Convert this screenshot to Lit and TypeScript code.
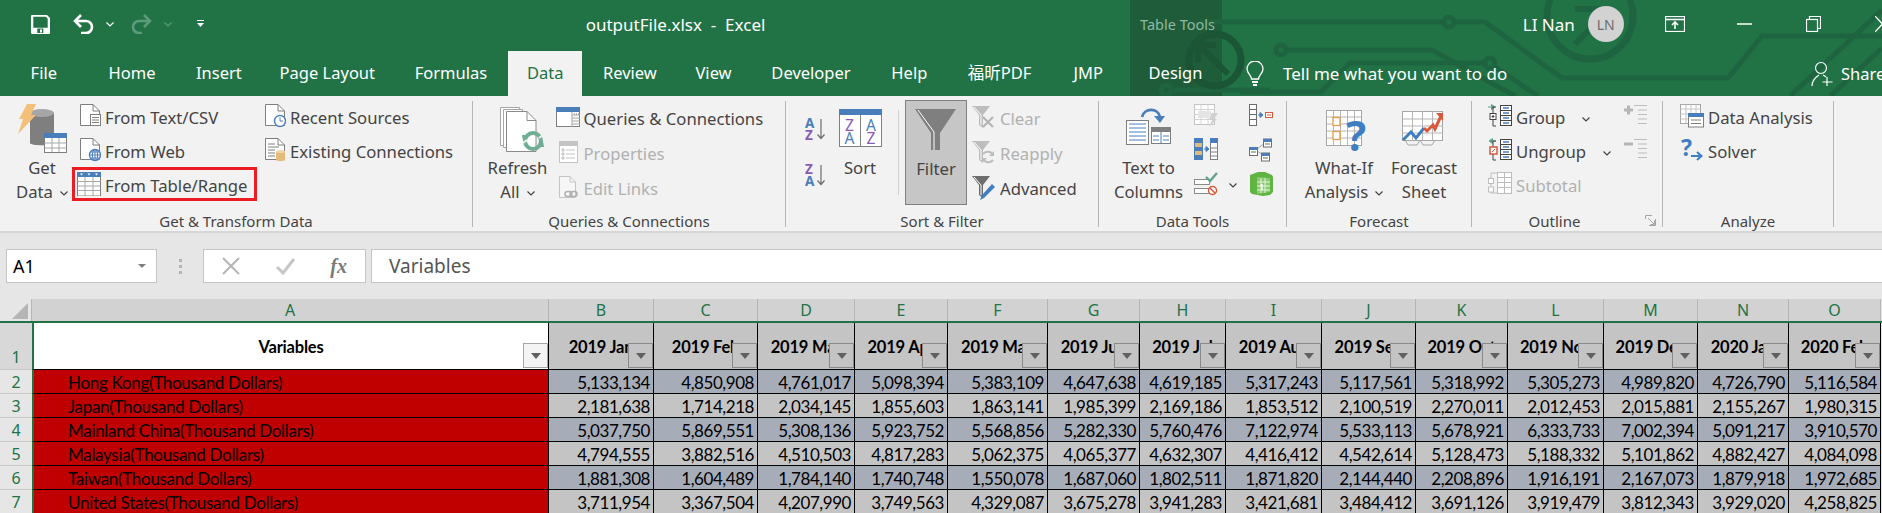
import { LitElement, html, css } from "lit";
import { customElement } from "lit/decorators.js";

const GREEN = "#217346";

const caret = (c = "#444") => html`<svg class="caret" width="8" height="5" viewBox="0 0 8 5"><path d="M.5.5 4 4 7.5.5" fill="none" stroke=${c} stroke-width="1.2"/></svg>`;

const icons = {
  textCsv: html`<svg class="i" width="24" height="24" viewBox="0 0 24 24"><g transform="translate(3 0)"><path d="M.5.5H13L19.5 7V21.5H.5Z" fill="#fff" stroke="#7f7f7f"/><path d="M13 .5V7H19.5" fill="none" stroke="#7f7f7f"/><rect x="10.5" y="10.5" width="10" height="11" fill="#fff" stroke="#7f7f7f"/><path d="M12 13.5h7M12 16h7M12 18.5h7" stroke="#7f7f7f"/></g></svg>`,
  web: html`<svg class="i" width="24" height="24" viewBox="0 0 24 24"><g transform="translate(3 0)"><path d="M.5.5H13L19.5 7V21.5H.5Z" fill="#fff" stroke="#7f7f7f"/><path d="M13 .5V7H19.5" fill="none" stroke="#7f7f7f"/><circle cx="15" cy="17" r="5.5" fill="#fff" stroke="#4a7ebb" stroke-width="1.4"/><path d="M9.5 17h11M15 11.5v11M11 14h8M11 20h8" stroke="#4a7ebb"/><ellipse cx="15" cy="17" rx="2.6" ry="5.5" fill="none" stroke="#4a7ebb"/></g></svg>`,
  table: html`<svg class="i" width="24" height="24" viewBox="0 0 24 24"><rect x=".5" y="1" width="23" height="23" fill="#fff" stroke="#7f7f7f"/><rect y="0" width="24" height="5" fill="#4a7ebb"/><path d="M3 1.5h3L4.500 3.500ZM10.500 1.500h3L12 3.500ZM18 1.500h3L19.500 3.500Z" fill="#fff"/><path d="M.5 9.500h23M.5 14h23M.5 18.500h23M8 5v19M16 5v19" stroke="#a6a6a6"/></svg>`,
  recent: html`<svg class="i" width="24" height="24" viewBox="0 0 24 24"><g transform="translate(3 0)"><path d="M.5.5H13L19.5 7V21.5H.5Z" fill="#fff" stroke="#7f7f7f"/><path d="M13 .5V7H19.5" fill="none" stroke="#7f7f7f"/><circle cx="15" cy="17" r="5.500" fill="#fff" stroke="#4a7ebb" stroke-width="1.400"/><path d="M15 13.500V17h3" fill="none" stroke="#4a7ebb"/></g></svg>`,
  existing: html`<svg class="i" width="24" height="24" viewBox="0 0 24 24"><g transform="translate(3 0)"><path d="M.5.5H13L19.5 7V21.5H.5Z" fill="#fff" stroke="#7f7f7f"/><path d="M13 .5V7H19.5" fill="none" stroke="#7f7f7f"/><path d="M3 6h7M3 9h11M3 12h7M3 15h7M3 18h7" stroke="#7f7f7f"/><path d="M11 13.500h9v8.500c0 1.500-9 1.500-9 0Z" fill="#e5bb7b"/><ellipse cx="15.500" cy="13.500" rx="4.500" ry="1.600" fill="#f0d5a8"/></g></svg>`,
  queries: html`<svg class="i" width="24" height="24" viewBox="0 0 24 24"><rect x=".5" y="1.500" width="23" height="19" fill="#fff" stroke="#7f7f7f"/><rect y="1" width="24" height="5" fill="#4a7ebb"/><path d="M16 6v15M16 9h8M16 12h8M16 15h8M16 18h8" stroke="#a6a6a6"/><path d="M18 8h1M20 8h1M22 8h1" stroke="#7f7f7f"/></svg>`,
  properties: html`<svg class="i" width="24" height="24" viewBox="0 0 24 24"><rect x="3.500" y=".5" width="18" height="21" fill="#fff" stroke="#c4c4c4"/><rect x="3" y="0" width="19" height="5" fill="#c4c4c4"/><path d="M10 9h9M10 13h9M10 17h9" stroke="#c4c4c4"/><path d="M6 8h2v2H6ZM6 12h2v2H6ZM6 16h2v2H6Z" fill="none" stroke="#bdbdbd"/></svg>`,
  links: html`<svg class="i" width="24" height="24" viewBox="0 0 24 24"><g transform="translate(3 0)"><path d="M.5.5H11L16.500 6V21.500H.5Z" fill="#f6f6f6" stroke="#c4c4c4"/><path d="M11 .5V6H16.500" fill="none" stroke="#c4c4c4"/><rect x="6" y="15.500" width="7" height="5" rx="2.500" fill="none" stroke="#b0b0b0" stroke-width="1.500"/><rect x="11" y="15.500" width="7" height="5" rx="2.500" fill="none" stroke="#b0b0b0" stroke-width="1.500"/></g></svg>`,
  clear: html`<svg class="i" width="24" height="24" viewBox="0 0 24 24"><path d="M0 0h18L11 9v13L7 19V9Z" fill="#bdbdbd"/><path d="M2 1l7 8v10" fill="none" stroke="#fff"/><path d="M11 11l10 10M21 11 11 21" stroke="#b5b5b5" stroke-width="2.200"/></svg>`,
  reapply: html`<svg class="i" width="24" height="24" viewBox="0 0 24 24"><path d="M0 0h18L11 9v13L7 19V9Z" fill="#bdbdbd"/><path d="M2 1l7 8v10" fill="none" stroke="#fff"/><path d="M21 14a6 6 0 0 0-10-1M11 18a6 6 0 0 0 10 1" fill="none" stroke="#bdbdbd" stroke-width="2"/><path d="M22 10v5h-5ZM10 22v-5h5Z" fill="#bdbdbd"/></svg>`,
  advanced: html`<svg class="i" width="24" height="24" viewBox="0 0 24 24"><path d="M0 0h18L11 9v13L7 19V9Z" fill="#6d6d6d"/><path d="M2 1l7 8v10" fill="none" stroke="#fff"/><path d="M8 24l2-5L20 8l3 3L12 22Z" fill="#3f7fc1"/></svg>`,
  az: html`<svg width="20" height="24" viewBox="0 0 20 24"><text x="0" y="11" class="sl" fill="#4a7ebb">A</text><text x="0" y="23" class="sl" fill="#8a5ab5">Z</text><path d="M16 2v19M12.500 17.500 16 21.500l3.500-4" fill="none" stroke="#6d6d6d" stroke-width="1.200"/></svg>`,
  za: html`<svg width="20" height="24" viewBox="0 0 20 24"><text x="0" y="11" class="sl" fill="#8a5ab5">Z</text><text x="0" y="23" class="sl" fill="#4a7ebb">A</text><path d="M16 2v19M12.500 17.500 16 21.500l3.500-4" fill="none" stroke="#6d6d6d" stroke-width="1.200"/></svg>`,
  flash: html`<svg class="i" width="24" height="24" viewBox="0 0 24 24"><rect x=".5" y=".5" width="20" height="20" fill="#fff" stroke="#c4c4c4"/><path d="M.5 5.500h20M.5 10.500h20M.5 15.500h20M7 .5v20M14 .5v20" stroke="#d4d4d4"/><rect x="4" y="7" width="13" height="7" fill="#e4e4e4"/><path d="M18 9h6l-4 6h3l-8 8 3-7h-3Z" fill="#d0d0d0"/></svg>`,
  dupes: html`<svg class="i" width="24" height="24" viewBox="0 0 24 24"><rect x="0" y="0" width="9" height="22" fill="#4a7ebb"/><rect x="1" y="5" width="7" height="4" fill="#e5bb7b"/><rect x="1" y="13" width="7" height="4" fill="#e5bb7b"/><rect x="16.500" y=".5" width="7" height="21" fill="#fff" stroke="#7f7f7f"/><rect x="16" y="0" width="8" height="5" fill="#4a7ebb"/><path d="M16.500 10h7M16.500 14h7M16.500 18h7" stroke="#7f7f7f"/><path d="M10 11h4M12 8.500l3 2.500-3 2.500Z" fill="#4a7ebb" stroke="#4a7ebb"/></svg>`,
  validate: html`<svg class="i" width="24" height="24" viewBox="0 0 24 24"><rect x=".5" y="7.500" width="15" height="5" fill="#fff" stroke="#8a8a8a"/><rect x=".5" y="16.500" width="15" height="5" fill="#fff" stroke="#8a8a8a"/><path d="M12 5l4 4 7-8" fill="none" stroke="#5fa38a" stroke-width="2.400"/><circle cx="18.500" cy="18.500" r="4" fill="#fff" stroke="#d9583b" stroke-width="1.500"/><path d="M16 16l5 5" stroke="#d9583b" stroke-width="1.500"/></svg>`,
  consol: html`<svg class="i" width="24" height="24" viewBox="0 0 24 24"><rect x=".5" y=".5" width="7" height="21" fill="#fff" stroke="#6d6d6d"/><path d="M.5 5.500h7M.5 10.500h7M.5 15.500h7" stroke="#6d6d6d"/><path d="M9 11h3M11 8.500l3 2.500-3 2.500Z" fill="#4a7ebb" stroke="#4a7ebb"/><rect x="16.500" y="8.500" width="7" height="5" fill="#fff" stroke="#d9583b"/><path d="M18 11h4" stroke="#d9583b"/></svg>`,
  rel: html`<svg class="i" width="24" height="24" viewBox="0 0 24 24"><path d="M8 11l8-6M8 13l8 5" stroke="#a6a6a6"/><rect x=".5" y="9.500" width="8" height="8" fill="#fff" stroke="#6d6d6d"/><rect y="9" width="9" height="3" fill="#4a7ebb"/><path d="M2 14h5" stroke="#6d6d6d"/><rect x="14.500" y="1" width="8" height="8" fill="#fff" stroke="#6d6d6d"/><rect x="14" y="1" width="9" height="3" fill="#4a7ebb"/><path d="M16 6h5" stroke="#6d6d6d"/><rect x="12.500" y="15" width="8" height="8" fill="#fff" stroke="#6d6d6d"/><rect x="12" y="15" width="9" height="3" fill="#4a7ebb"/><path d="M14 20h5" stroke="#6d6d6d"/></svg>`,
  model: html`<svg class="i" width="24" height="24" viewBox="0 0 24 24"><path d="M1 3 9 0h7l7 3 1 2v15l-3 3-7 1-11-2-2-2Z" fill="#5fb442"/><path d="M8 5l13 1v14l-13 2Z" fill="#8cc974"/><path d="M12 6v15M16 6v15M8 10h13M8 14h13M8 18h13" stroke="#e4f2dc"/><path d="M13 18v-6M13 12l-1.500 2" stroke="#fff" stroke-width="1.200"/></svg>`,
  group: html`<svg class="i" width="24" height="24" viewBox="0 0 24 24"><path d="M0 3h6M3.500 .5 7 3 3.500 5.500Z" fill="#5fa38a" stroke="#5fa38a"/><path d="M8 3H5v19h3" fill="none" stroke="#444"/><rect x="2" y="9.500" width="6" height="6" fill="#fff" stroke="#444"/><path d="M3.500 12.500h3M5 11v3" stroke="#444"/><rect x="12.500" y="1.500" width="11" height="20" fill="#fff" stroke="#444"/><path d="M12.500 6.500h11M12.500 11.500h11M12.500 16.500h11" stroke="#444"/><path d="M15 4h6M15 9h6M15 14h6M15 19h6" stroke="#4a7ebb" stroke-width="1.500"/></svg>`,
  ungroup: html`<svg class="i" width="24" height="24" viewBox="0 0 24 24"><path d="M2 3h6M4.500 .5 1 3 4.500 5.500Z" fill="#5fa38a" stroke="#5fa38a"/><path d="M8 3H5v19h3" fill="none" stroke="#444"/><rect x="2" y="9" width="7" height="7" fill="#fff" stroke="#d9583b" stroke-width="1.500"/><path d="M4 14l3-3" stroke="#d9583b"/><rect x="12.500" y="1.500" width="11" height="20" fill="#fff" stroke="#444"/><path d="M12.500 6.500h11M12.500 11.500h11M12.500 16.500h11" stroke="#444"/><path d="M15 4h6M15 9h6M15 14h6M15 19h6" stroke="#4a7ebb" stroke-width="1.500"/></svg>`,
  subtotal: html`<svg class="i" width="24" height="24" viewBox="0 0 24 24"><path d="M9 1H3v20h6" fill="none" stroke="#bdbdbd"/><rect x=".5" y="6.500" width="5" height="5" fill="#fff" stroke="#bdbdbd"/><rect x=".5" y="15" width="5" height="5" fill="#fff" stroke="#bdbdbd"/><rect x="9.500" y=".5" width="14" height="21" fill="#fff" stroke="#bdbdbd"/><path d="M9.500 5.500h14M9.500 10.500h14M9.500 15.500h14M16.500.5v21" stroke="#bdbdbd"/></svg>`,
  show: html`<svg class="i" width="24" height="24" viewBox="0 0 24 24"><path d="M0 6h9M4.500 1.500v9" stroke="#b5b5b5" stroke-width="3"/><path d="M10 1.500h13M14 6h9M14 10.500h9M14 15h9M14 19.500h9" stroke="#bdbdbd"/></svg>`,
  hide: html`<svg class="i" width="24" height="24" viewBox="0 0 24 24"><path d="M0 6h9" stroke="#b5b5b5" stroke-width="3"/><path d="M10 1.500h13M14 6h9M14 10.500h9M14 15h9M14 19.500h9" stroke="#bdbdbd"/></svg>`,
  analysis: html`<svg class="i" width="24" height="24" viewBox="0 0 24 24"><rect x=".5" y=".5" width="20" height="19" fill="#fff" stroke="#a6a6a6"/><path d="M.5 5h20M.5 10h20M.5 15h20M6 .5v19M11 .5v19M16 .5v19" stroke="#c4c4c4"/><rect x="8.500" y="9.500" width="15" height="13.500" fill="#fff" stroke="#7f7f7f"/><rect x="8" y="9" width="16" height="4" fill="#4a7ebb"/><path d="M11 16h10M11 19.500h10" stroke="#7f7f7f"/></svg>`,
  solver: html`<svg class="i" width="24" height="24" viewBox="0 0 24 24"><text x="1" y="18" class="q" fill="#3f7fc1">?</text><path d="M11 18h10M17 14l4.500 4-4.500 4" fill="none" stroke="#3f7fc1" stroke-width="2"/></svg>`,
};

const bigIcons = {
  getData: html`<svg width="54" height="55" viewBox="0 0 54 55"><path d="M15 42V12h24v30c0 3-24 3-24 0Z" fill="#7f7f7f"/><ellipse cx="27" cy="12" rx="12" ry="4" fill="#a6a6a6"/><path d="M12 3h9l-5 11h5L3 33l5-15H4Z" fill="#f2c078"/><rect x="29.500" y="32.500" width="22" height="19" fill="#fff" stroke="#7f7f7f"/><rect x="29" y="32" width="23" height="5" fill="#4a7ebb"/><path d="M29.500 42h22M29.500 47h22M37 37v14M44 37v14" stroke="#a6a6a6"/></svg>`,
  refresh: html`<svg width="66" height="55" viewBox="0 0 66 55"><path d="M15.500 6.500h19v38h-19Z" fill="#fff" stroke="#a6a6a6"/><path d="M18.500 8.500h19v38h-19Z" fill="#fff" stroke="#a6a6a6"/><path d="M21.500 10.500H42l9 9V50.500H21.500Z" fill="#fff" stroke="#8a8a8a"/><path d="M42 10.500v9h9" fill="none" stroke="#8a8a8a"/><circle cx="48" cy="40" r="8" fill="none" stroke="#6fae95" stroke-width="4"/><path d="M37 34h7l-6 6ZM59 46h-7l6-6Z" fill="#6fae95"/><path d="M38 42l4-3M54 37l4-3" stroke="#f2f2f2" stroke-width="2"/></svg>`,
  sort: html`<svg width="50" height="55" viewBox="0 0 50 55"><rect x="4.500" y="8.500" width="42" height="37" fill="#fff" stroke="#7f7f7f"/><rect x="4" y="8" width="43" height="6" fill="#4a7ebb"/><path d="M25.500 14v31" stroke="#7f7f7f"/><text x="14.500" y="30" class="sb" fill="#8a5ab5">Z</text><text x="14.500" y="43" class="sb" fill="#4a7ebb">A</text><text x="36" y="30" class="sb" fill="#4a7ebb">A</text><text x="36" y="43" class="sb" fill="#8a5ab5">Z</text></svg>`,
  filter: html`<svg width="42" height="42" viewBox="0 0 42 42"><path d="M0 0h41L25 24v17h-9V24Z" fill="#7f7f7f"/><path d="M3 1l16 22v18" fill="none" stroke="#fff"/></svg>`,
  columns: html`<svg width="74" height="55" viewBox="0 0 74 55"><rect x="14.500" y="19.500" width="22" height="24" fill="#fff" stroke="#7f7f7f"/><path d="M17 23h17M17 27h17M17 31h17M17 35h17M17 39h17" stroke="#4a7ebb"/><rect x="39.500" y="26.500" width="19" height="16" fill="#fff" stroke="#7f7f7f"/><rect x="39" y="26" width="20" height="5" fill="#7f7f7f"/><path d="M49 31v12M41 35h6M51 35h6M41 39h6M51 39h6" stroke="#4a7ebb"/><path d="M30 16c2-9 16-10 18 0" fill="none" stroke="#4a7ebb" stroke-width="2.800"/><path d="M42 15h11l-5 7Z" fill="#4a7ebb"/></svg>`,
  whatif: html`<svg width="80" height="55" viewBox="0 0 80 55"><rect x="22.500" y="9.500" width="35" height="35" fill="#fff" stroke="#a6a6a6"/><path d="M22.500 16h35M22.500 23h35M22.500 30h35M22.500 37h35M29.500 9.500v35M36.500 9.500v35M43.500 9.500v35M50.500 9.500v35" stroke="#b5b5b5"/><rect x="29" y="16.500" width="7" height="8" fill="#fff" stroke="#e39b4c" stroke-width="1.300"/><rect x="29" y="30.500" width="7" height="8" fill="#fff" stroke="#e39b4c" stroke-width="1.300"/><text x="42" y="50" class="wq" fill="#3f7fc1">?</text></svg>`,
  forecast: html`<svg width="70" height="55" viewBox="0 0 70 55"><rect x="13.500" y="10.500" width="40" height="29" fill="#fff" stroke="#a6a6a6"/><path d="M13.500 18h40M13.500 25h40M13.500 32h40M23.500 10.500v29M33.500 10.500v29M43.500 10.500v29" stroke="#b5b5b5"/><path d="M14 39l8-8 5 6 8-10" fill="none" stroke="#3f7fc1" stroke-width="3"/><path d="M35 27l3 3 6-6 2 4 6-13" fill="none" stroke="#d9583b" stroke-width="3"/><path d="M47 12h7v8Z" fill="#d9583b"/><path d="M16 39l3 5h9l3-5 3 5h9l3-5" fill="none" stroke="#a6a6a6"/></svg>`,
};

const TABS = [
  { label: "File", w: 78, pad: 0 },
  { label: "Home", w: 87.4, pad: 0 },
  { label: "Insert", w: 83.6, pad: 0 },
  { label: "Page Layout", w: 135.1, pad: 0 },
  { label: "Formulas", w: 93.3, pad: 0 },
  { label: "Data", w: 74, pad: 19, active: true },
  { label: "Review", w: 113.5, pad: 21 },
  { label: "View", w: 75.9, pad: 0 },
  { label: "Developer", w: 120, pad: 0 },
  { label: "Help", w: 76.4, pad: 0 },
  { label: "福昕PDF", w: 105.7, pad: 0 },
  { label: "JMP", w: 75.1, pad: 0 },
  { label: "Design", w: 98.4, pad: 0 },
];

const COLS = ["B", "C", "D", "E", "F", "G", "H", "I", "J", "K", "L", "M", "N", "O"];
const MONTHS = ["2019 Jan", "2019 Feb", "2019 Mar", "2019 Apr", "2019 May", "2019 Jun", "2019 Jul", "2019 Aug", "2019 Sep", "2019 Oct", "2019 Nov", "2019 Dec", "2020 Jan", "2020 Feb"];

const ROWS = [
  ["Hong Kong(Thousand Dollars)", "5,133,134 4,850,908 4,761,017 5,098,394 5,383,109 4,647,638 4,619,185 5,317,243 5,117,561 5,318,992 5,305,273 4,989,820 4,726,790 5,116,584"],
  ["Japan(Thousand Dollars)", "2,181,638 1,714,218 2,034,145 1,855,603 1,863,141 1,985,399 2,169,186 1,853,512 2,100,519 2,270,011 2,012,453 2,015,881 2,155,267 1,980,315"],
  ["Mainland China(Thousand Dollars)", "5,037,750 5,869,551 5,308,136 5,923,752 5,568,856 5,282,330 5,760,476 7,122,974 5,533,113 5,678,921 6,333,733 7,002,394 5,091,217 3,910,570"],
  ["Malaysia(Thousand Dollars)", "4,794,555 3,882,516 4,510,503 4,817,283 5,062,375 4,065,377 4,632,307 4,416,412 4,542,614 5,128,473 5,188,332 5,101,862 4,882,427 4,084,098"],
  ["Taiwan(Thousand Dollars)", "1,881,308 1,604,489 1,784,140 1,740,748 1,550,078 1,687,060 1,802,511 1,871,820 2,144,440 2,208,896 1,916,191 2,167,073 1,879,918 1,972,685"],
  ["United States(Thousand Dollars)", "3,711,954 3,367,504 4,207,990 3,749,563 4,329,087 3,675,278 3,941,283 3,421,681 3,484,412 3,691,126 3,919,479 3,812,343 3,929,020 4,258,825"],
];

@customElement("app-root")
export class AppRoot extends LitElement {
  static styles = css`
    :host {
      display: block;
      width: 1882px;
      height: 513px;
      overflow: hidden;
      background: #e6e6e6;
      font-family: "Noto Sans", "Noto Sans CJK SC", sans-serif;
      color: #444;
    }

    /* title bar and tabs */
    .head {
      position: relative;
      height: 96px;
      background: #217346;
      color: #fff;
      overflow: hidden;
    }
    .circuit {
      position: absolute;
      left: 0;
      top: 0;
    }
    .titlebar, .tabs {
      position: relative;
      display: flex;
      align-items: center;
    }
    .titlebar > *, .tabs > * { flex: none; }
    .titlebar {
      height: 51px;
      padding-left: 31px;
      padding-bottom: 3px;
      box-sizing: border-box;
    }
    .titlebar svg { display: block; }
    .undo { margin-left: 23px; }
    .c1 { margin-left: 12px; }
    .redo { margin-left: 17px; }
    .c2 { margin-left: 12px; }
    .qat { margin-left: 25px; }
    .title {
      margin-left: 381.7px;
      width: 554.3px;
      font-size: 17px;
      white-space: pre;
    }
    .tools {
      width: 382.8px;
      font-size: 14.5px;
      color: #8fb9a2;
    }
    .user {
      width: 65px;
      font-size: 17px;
    }
    .avatar {
      width: 36px;
      height: 36px;
      border-radius: 50%;
      background: #d2d2d2;
      color: #6d6d6d;
      font-size: 14px;
      display: flex;
      align-items: center;
      justify-content: center;
    }
    .display { margin-left: 41px; }
    .min { margin-left: 52px; }
    .restore { margin-left: 54px; }
    .close { margin-left: 54px; }
    .tabs {
      height: 45px;
      padding-left: 30.6px;
      font-size: 16.5px;
    }
    .tab {
      box-sizing: border-box;
      height: 45px;
      line-height: 43px;
      white-space: nowrap;
    }
    .tab.active {
      background: #f2f2f2;
      color: #217346;
    }
    .bulb { margin-left: -1px; display: block; }
    .tell { margin-left: 19px; width: 528px; white-space: nowrap; font-size: 17px; }
    .share-i { display: block; }
    .share { margin-left: 8px; white-space: nowrap; }

    /* ribbon */
    .ribbon {
      display: flex;
      height: 137px;
      padding: 5px 0 6px;
      box-sizing: border-box;
      background: #f2f2f2;
      border-bottom: 2px solid #d6d6d6;
      font-size: 16.7px;
    }
    .group {
      position: relative;
      box-sizing: border-box;
      height: 126px;
      border-right: 1px solid #b5b5b5;
      flex: none;
    }
    .body {
      display: flex;
      height: 111px;
    }
    .label {
      text-align: center;
      font-size: 15px;
      line-height: 18px;
      height: 18px;
    }
    .g6 .label { padding-right: 25px; }
    .launcher {
      position: absolute;
      right: 6px;
      bottom: 1px;
      display: block;
    }
    .big {
      display: flex;
      flex-direction: column;
      align-items: center;
      flex: none;
    }
    .big > svg { display: block; }
    .big .t {
      height: 24px;
      line-height: 24px;
      white-space: nowrap;
    }
    .caret { margin-left: 7px; vertical-align: 2px; flex: none; }
    .col { flex: none; }
    .row {
      position: relative;
      box-sizing: border-box;
      display: flex;
      align-items: center;
      gap: 4px;
      height: 34px;
      padding: 0 0 2px 5px;
      white-space: nowrap;
    }
    .row.tall { height: 35px; padding-bottom: 0; }
    .row.hl::after {
      content: "";
      position: absolute;
      left: 0;
      right: 0;
      top: -2px;
      bottom: 2px;
      border: 3px solid #ed1c24;
    }
    .row .i { display: block; margin-top: -2px; flex: none; }
    .off { color: #b1b1b1; }
    .rc { margin-left: 6px; }
    .stack { display: flex; flex-direction: column; padding-top: 5px; margin-left: 19px; width: 20px; }
    .stack .cell-i { height: 46px; display: flex; align-items: center; }
    .vline {
      width: 1px;
      height: 85px;
      margin: 9px 0 0 13px;
      background: #d0d0d0;
    }
    .filter {
      box-sizing: border-box;
      width: 62px;
      height: 105px;
      margin: -1px 0 0 6px;
      padding-top: 8px;
      background: #c6c6c6;
      border: 1px solid #7f7f7f;
    }
    .filter .t { margin-top: 6px; }
    .sl { font: bold 13.5px "Noto Sans", sans-serif; }
    .sb { font: 15.5px "Noto Sans", sans-serif; text-anchor: middle; }
    .wq { font: bold 42px "Noto Sans", sans-serif; }
    .q { font: bold 23px "Noto Sans", sans-serif; }
    .g1 { width: 473px; }
    .g1 .body { padding-left: 15px; }
    .g2 { width: 313px; }
    .g2 .body { padding-left: 11.5px; }
    .g3 { width: 313px; }
    .g4 { width: 188px; }
    .g4 .body { padding-left: 12.5px; }
    .g5 { width: 185px; }
    .g5 .body { padding-left: 17px; }
    .g6 { width: 191px; }
    .g6 .body { padding-left: 11px; }
    .g7 { width: 171px; }
    .g7 .body { padding-left: 12px; }

    /* formula bar */
    .formula {
      display: flex;
      height: 66px;
      padding: 16px 0 16px 6px;
      box-sizing: border-box;
      font-size: 16px;
    }
    .box {
      box-sizing: border-box;
      height: 34px;
      background: #fff;
      border: 1px solid #c6c6c6;
      display: flex;
      align-items: center;
    }
    .name {
      width: 151px;
      padding: 0 10px 0 6px;
      justify-content: space-between;
      color: #000;
      font-size: 18px;
    }
    .arrow {
      width: 0;
      height: 0;
      border: 4px solid transparent;
      border-top: 4px solid #7f7f7f;
      border-bottom: 0;
    }
    .dots {
      width: 46px;
      display: flex;
      flex-direction: column;
      align-items: center;
      justify-content: center;
      gap: 3px;
    }
    .dots i {
      width: 3px;
      height: 3px;
      background: #b5b5b5;
    }
    .fx-btns {
      width: 163px;
      padding: 0 18px 0 18px;
      justify-content: space-between;
      color: #b5b5b5;
    }
    .fx {
      font: italic bold 20px "Liberation Serif", serif;
      color: #7a7a7a;
    }
    .input {
      flex: 1;
      margin-left: 5px;
      padding-left: 17px;
      color: #555;
      border-right: 0;
      font-size: 19px;
    }

    /* sheet */
    .sheet {
      display: grid;
      grid-template-columns: 32px 517px 105px 104px 97px 93px 100px 92px 86px 96px 94px 92px 96px 94px 91px 92px 1px;
      grid-template-rows: 22px 2px 47px repeat(6, 24px);
      font-family: Lato, sans-serif;
      font-size: 17px;
      letter-spacing: -0.45px;
      color: #000;
    }
    .corner {
      background: #e6e6e6;
      border-right: 1px solid #b5b5b5;
      position: relative;
    }
    .corner::after {
      content: "";
      position: absolute;
      right: 3px;
      bottom: 2px;
      width: 0;
      height: 0;
      border-style: solid;
      border-width: 0 0 16px 16px;
      border-color: transparent transparent #b5b5b5 transparent;
    }
    .colh {
      box-sizing: border-box;
      background: #d2d2d2;
      border-right: 1px solid #b5b5b5;
      color: #217346;
      font: 16px "Noto Sans", sans-serif;
      letter-spacing: 0;
      text-align: center;
      line-height: 22px;
    }
    .rule {
      grid-column: 1 / -1;
      background: #217346;
    }
    .rowh {
      box-sizing: border-box;
      display: flex;
      align-items: flex-end;
      justify-content: center;
      padding-top: 2px;
      background: #e6e6e6;
      border-bottom: 1px solid #c6c6c6;
      color: #217346;
      font: 16px/21px "Noto Sans", sans-serif;
      letter-spacing: 0;
    }
    .rowh.first { background: #d8d8d8; line-height: 23px; padding-top: 0; }
    .cell {
      box-sizing: border-box;
      border-right: 1px solid #000;
      border-bottom: 1px solid #000;
      white-space: nowrap;
      overflow: hidden;
    }
    .hcell {
      position: relative;
      display: flex;
      align-items: center;
      justify-content: center;
      padding-top: 2px;
      background: #c4c4c4;
      font-weight: bold;
      font-size: 16.5px;
      letter-spacing: -0.2px;
    }
    .hcell.first {
      background: #fff;
      border-left: 2px solid #217346;
    }
    .fbtn {
      position: absolute;
      right: 0;
      bottom: 1px;
      box-sizing: border-box;
      width: 25px;
      height: 25px;
      background: inherit;
      border: 1px solid #8a8a8a;
      display: flex;
      align-items: center;
      justify-content: center;
    }
    .hcell.first .fbtn { background: #f4f4f4; border-color: #a6a6a6; }
    .fbtn i {
      width: 0;
      height: 0;
      border-style: solid;
      border-width: 6px 5px 0;
      border-color: #606060 transparent transparent;
    }
    .rname {
      background: #c00000;
      padding-left: 34px;
      border-left: 2px solid #217346;
      line-height: 25px;
      letter-spacing: -0.3px;
    }
    .num {
      background: #c4c4c4;
      text-align: right;
      padding-right: 3px;
      line-height: 25px;
    }
    .num.odd { background: #a6adb9; }
    .sliver { border: 0; background: #e6e6e6; }
  `;

  private head() {
    return html`
      <div class="head">
        <svg class="circuit" width="1882" height="96" viewBox="0 0 1882 96" fill="none" stroke="#1f6440" stroke-width="5">
          <rect x="1130" y="0" width="92" height="96" fill="#1e5c3a" stroke="none"/>
          <path d="M1200 22H1445M1453 22H1485L1562 78H1728L1762 36H1882"/>
          <circle cx="1449" cy="22" r="5"/>
          <path d="M1286 50H1432L1515 96"/>
          <circle cx="1281" cy="50" r="5"/>
          <path d="M1240 92H1321L1350 63H1485M1495 67 1538 96"/>
          <circle cx="1490" cy="63" r="5"/>
          <path d="M1172 90H1270"/>
          <circle cx="1166" cy="90" r="5"/>
          <circle cx="1215" cy="60" r="26" stroke-width="7" stroke="#1b5535"/>
          <path d="M1228 74 1200 46M1198 62V45H1216" stroke="#1b5535" stroke-width="6"/>
          <circle cx="1590" cy="16" r="43" stroke-width="7"/>
          <path d="M1575 44 1610 9M1575 9H1612" stroke-width="6"/>
          <path d="M1790 96 1882 10M1830 96 1882 48" stroke-width="5"/>
        </svg>
        <div class="titlebar">
          <svg width="19" height="19" viewBox="0 0 19 19"><path d="M1 0h15l3 3v15a1 1 0 0 1-1 1H1a1 1 0 0 1-1-1V1a1 1 0 0 1 1-1Z" fill="#fff"/><path d="M2.300 1.700h12.500l1.900 2v9H2.300Z" fill="${GREEN}"/><path d="M6.300 13.500h6v4.500h-6Z" fill="${GREEN}"/><path d="M9 14.500h2v3H9Z" fill="#fff"/></svg>
          <svg class="undo" width="21" height="20" viewBox="0 0 21 20"><path d="M8 1 2 7l6 6M2 7h11a6 6 0 0 1 0 12H8" fill="none" stroke="#fff" stroke-width="2.600"/></svg>
          <svg class="c1" width="8" height="5" viewBox="0 0 8 5"><path d="M.5.5 4 4 7.500.5" fill="none" stroke="#fff" stroke-width="1.200"/></svg>
          <svg class="redo" width="21" height="20" viewBox="0 0 21 20"><path d="M13 1l6 6-6 6M19 7H8a6 6 0 0 0 0 12h3" fill="none" stroke="#5d9b7c" stroke-width="2.600"/></svg>
          <svg class="c2" width="8" height="5" viewBox="0 0 8 5"><path d="M.5.5 4 4 7.500.5" fill="none" stroke="#5d9b7c" stroke-width="1.200"/></svg>
          <svg class="qat" width="7" height="8" viewBox="0 0 7 8"><path d="M0 .5h7" stroke="#fff"/><path d="M0 3h7L3.500 7Z" fill="#fff"/></svg>
          <div class="title">outputFile.xlsx  -  Excel</div>
          <div class="tools">Table Tools</div>
          <div class="user">LI Nan</div>
          <div class="avatar">LN</div>
          <svg class="display" width="20" height="16" viewBox="0 0 20 16" fill="none" stroke="#fff"><rect x=".5" y=".5" width="19" height="15" stroke-width="1.200"/><path d="M0 3.500h20" stroke-width="1.600"/><path d="M10 13V6M7 9l3-3 3 3" stroke-width="1.600"/></svg>
          <svg class="min" width="15" height="2" viewBox="0 0 15 2"><path d="M0 1h15" stroke="#fff" stroke-width="1.500"/></svg>
          <svg class="restore" width="15" height="16" viewBox="0 0 15 16" fill="none" stroke="#fff" stroke-width="1.200"><rect x=".5" y="3.500" width="11" height="12"/><path d="M3.500 3.500V.5h11v12h-3"/></svg>
          <svg class="close" width="15" height="16" viewBox="0 0 15 16" fill="none" stroke="#fff" stroke-width="1.300"><path d="M0 0l15 16M15 0 0 16"/></svg>
        </div>
        <div class="tabs">
          ${TABS.map((t) => html`<div class="tab ${t.active ? "active" : ""}" style="width:${t.w}px;padding-left:${t.pad}px">${t.label}</div>`)}
          <svg class="bulb" width="18" height="26" viewBox="0 0 18 26" fill="none" stroke="#fff" stroke-width="1.300"><path d="M5.500 18c0-4-4.500-5.500-4.500-10a8 8 0 0 1 16 0c0 4.500-4.500 6-4.500 10Z"/><path d="M6 21h6M7 24h4" stroke-width="1.800"/></svg>
          <div class="tell">Tell me what you want to do</div>
          <svg class="share-i" width="22" height="26" viewBox="0 0 22 26" fill="none" stroke="#fff" stroke-width="1.200"><circle cx="10" cy="7" r="5.500"/><path d="M1 25c0-6 4-9 7-11M12 14c1 .5 2 1 3 2"/><path d="M16 16v9M11.500 21h10"/></svg>
          <div class="share">Share</div>
        </div>
      </div>
    `;
  }

  private ribbon() {
    return html`
      <div class="ribbon">
        <div class="group g1">
          <div class="body">
            <div class="big" style="width:54px">
              ${bigIcons.getData}
              <div class="t">Get</div>
              <div class="t">Data${caret()}</div>
            </div>
            <div class="col" style="margin-left:3px;width:185px">
              <div class="row">${icons.textCsv}From Text/CSV</div>
              <div class="row">${icons.web}From Web</div>
              <div class="row hl">${icons.table}From Table/Range</div>
            </div>
            <div class="col">
              <div class="row">${icons.recent}Recent Sources</div>
              <div class="row">${icons.existing}Existing Connections</div>
            </div>
          </div>
          <div class="label">Get &amp; Transform Data</div>
        </div>
        <div class="group g2">
          <div class="body">
            <div class="big" style="width:66px">
              ${bigIcons.refresh}
              <div class="t">Refresh</div>
              <div class="t">All${caret()}</div>
            </div>
            <div class="col">
              <div class="row tall">${icons.queries}Queries &amp; Connections</div>
              <div class="row tall off">${icons.properties}Properties</div>
              <div class="row tall off">${icons.links}Edit Links</div>
            </div>
          </div>
          <div class="label">Queries &amp; Connections</div>
        </div>
        <div class="group g3">
          <div class="body">
            <div class="stack">
              <div class="cell-i">${icons.az}</div>
              <div class="cell-i">${icons.za}</div>
            </div>
            <div class="big" style="width:50px;margin-left:10px">
              ${bigIcons.sort}
              <div class="t">Sort</div>
            </div>
            <div class="vline"></div>
            <div class="big filter">
              ${bigIcons.filter}
              <div class="t">Filter</div>
            </div>
            <div class="col">
              <div class="row tall off">${icons.clear}Clear</div>
              <div class="row tall off">${icons.reapply}Reapply</div>
              <div class="row tall">${icons.advanced}Advanced</div>
            </div>
          </div>
          <div class="label">Sort &amp; Filter</div>
        </div>
        <div class="group g4">
          <div class="body">
            <div class="big" style="width:74px">
              ${bigIcons.columns}
              <div class="t">Text to</div>
              <div class="t">Columns</div>
            </div>
            <div class="col" style="width:55px;margin-left:3px">
              <div class="row">${icons.flash}</div>
              <div class="row">${icons.dupes}</div>
              <div class="row">${icons.validate}${caret()}</div>
            </div>
            <div class="col" style="margin-left:0">
              <div class="row">${icons.consol}</div>
              <div class="row">${icons.rel}</div>
              <div class="row">${icons.model}</div>
            </div>
          </div>
          <div class="label">Data Tools</div>
        </div>
        <div class="group g5">
          <div class="body">
            <div class="big" style="width:80px">
              ${bigIcons.whatif}
              <div class="t">What-If</div>
              <div class="t">Analysis${caret()}</div>
            </div>
            <div class="big" style="width:70px;margin-left:5px">
              ${bigIcons.forecast}
              <div class="t">Forecast</div>
              <div class="t">Sheet</div>
            </div>
          </div>
          <div class="label">Forecast</div>
        </div>
        <div class="group g6">
          <div class="body">
            <div class="col" style="width:136px">
              <div class="row">${icons.group}Group<span class="rc">${caret()}</span></div>
              <div class="row">${icons.ungroup}Ungroup<span class="rc">${caret()}</span></div>
              <div class="row off">${icons.subtotal}Subtotal</div>
            </div>
            <div class="col">
              <div class="row">${icons.show}</div>
              <div class="row">${icons.hide}</div>
            </div>
          </div>
          <div class="label">Outline</div>
          <svg class="launcher" width="11" height="11" viewBox="0 0 11 11" fill="none" stroke="#a6a6a6"><path d="M10.500 4V10.500H4M.5 4V.5H7M3 3l6 6M5.500 9.500H9.500V5.500"/></svg>
        </div>
        <div class="group g7">
          <div class="body">
            <div class="col">
              <div class="row">${icons.analysis}Data Analysis</div>
              <div class="row">${icons.solver}Solver</div>
            </div>
          </div>
          <div class="label">Analyze</div>
        </div>
      </div>
    `;
  }

  private formula() {
    return html`
      <div class="formula">
        <div class="box name">A1<span class="arrow"></span></div>
        <div class="dots"><i></i><i></i><i></i></div>
        <div class="box fx-btns">
          <svg width="18" height="18" viewBox="0 0 18 18"><path d="M1 1l16 16M17 1 1 17" stroke="#b5b5b5" stroke-width="2"/></svg>
          <svg width="19" height="18" viewBox="0 0 19 18"><path d="M1 10l6 6L18 2" fill="none" stroke="#c6c6c6" stroke-width="3"/></svg>
          <span class="fx">fx</span>
        </div>
        <div class="box input">Variables</div>
      </div>
    `;
  }

  private sheet() {
    return html`
      <div class="sheet">
        <div class="corner"></div>
        <div class="colh">A</div>
        ${COLS.map((c) => html`<div class="colh">${c}</div>`)}
        <div class="colh sliver"></div>
        <div class="rule"></div>
        <div class="rowh first">1</div>
        <div class="cell hcell first">Variables<span class="fbtn"><i></i></span></div>
        ${MONTHS.map((m) => html`<div class="cell hcell">${m}<span class="fbtn"><i></i></span></div>`)}
        <div class="sliver"></div>
        ${ROWS.map(
          ([name, nums], r) => html`
            <div class="rowh">${r + 2}</div>
            <div class="cell rname">${name}</div>
            ${nums.split(" ").map((n) => html`<div class="cell num ${r % 2 === 0 ? "odd" : ""}">${n}</div>`)}
            <div class="sliver"></div>
          `
        )}
      </div>
    `;
  }

  render() {
    return html`${this.head()}${this.ribbon()}${this.formula()}${this.sheet()}`;
  }
}
